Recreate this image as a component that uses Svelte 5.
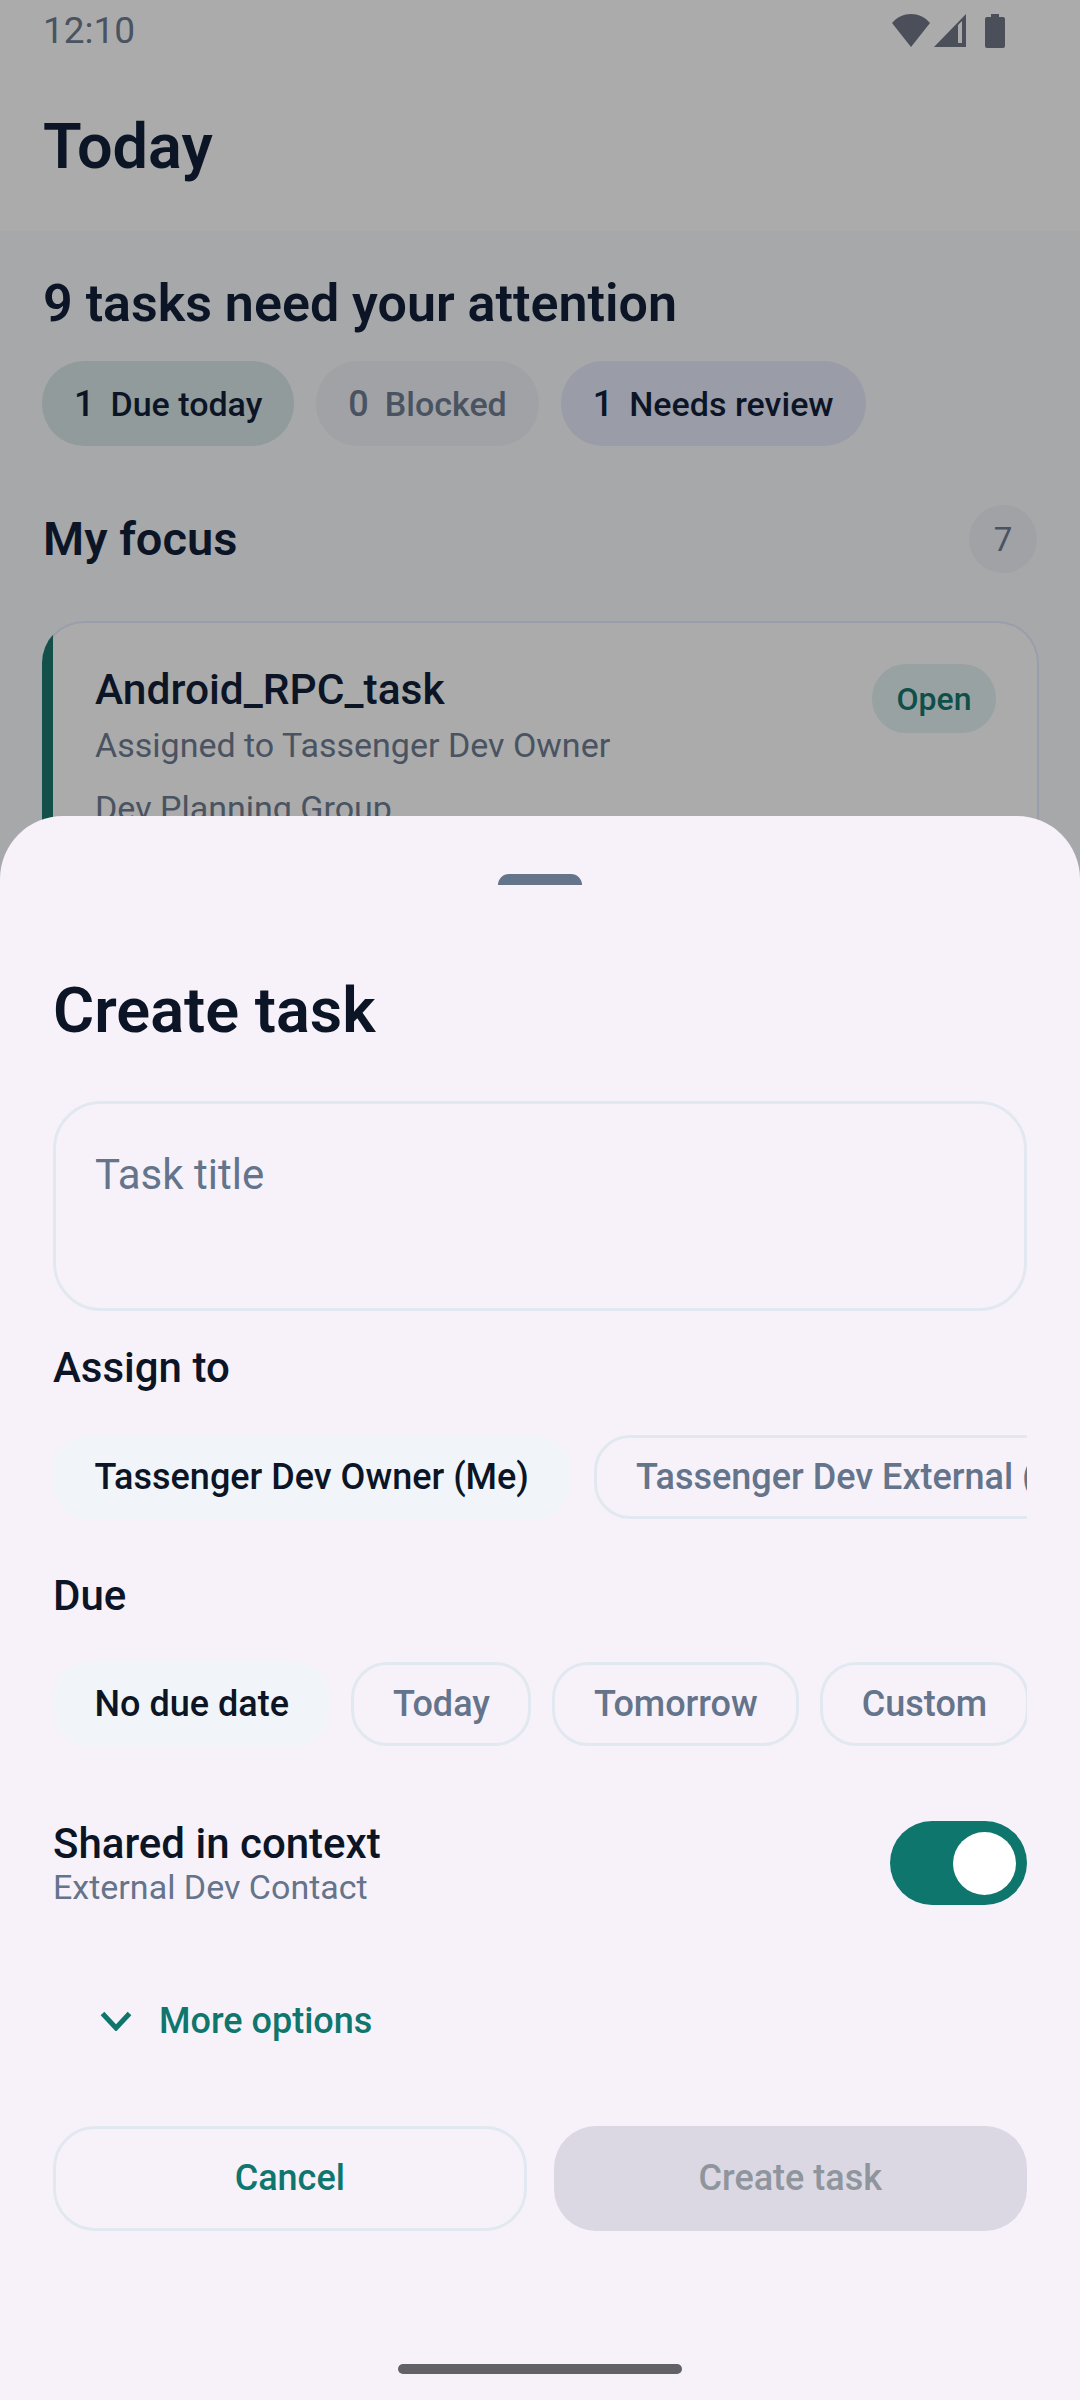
<script>
  const dueOptions = ['Today', 'Tomorrow', 'Custom'];
</script>

<div class="screen">
  <div class="behind">
    <header class="top">
      <div class="status">
        <span class="time">12:10</span>
        <div class="status-icons">
          <svg class="wifi" width="38" height="33" viewBox="0 0 38 33"><path d="M0 9 C5 3 12 0 19 0 C26 0 33 3 38 9 L19 33 Z" fill="#4a4f5a"/></svg>
          <svg class="signal" width="32" height="33" viewBox="0 0 32 33"><path fill-rule="evenodd" d="M32 0 V33 H0 Z M24 11 L28 7 V29 H24 Z" fill="#4a4f5a"/></svg>
          <svg width="20" height="34" viewBox="0 0 20 34"><path d="M6 0 H14 V3 H18 Q20 3 20 5 V32 Q20 34 18 34 H2 Q0 34 0 32 V5 Q0 3 2 3 H6 Z" fill="#4a4f5a"/></svg>
        </div>
      </div>
      <h1>Today</h1>
    </header>

    <main class="content">
      <h2>9 tasks need your attention</h2>
      <div class="summary">
        <div class="pill green"><b>1</b><span>Due today</span></div>
        <div class="pill grey"><b>0</b><span>Blocked</span></div>
        <div class="pill purple"><b>1</b><span>Needs review</span></div>
      </div>
      <div class="focus-head">
        <h3>My focus</h3>
        <span class="count">7</span>
      </div>
      <article class="card">
        <div class="accent"></div>
        <div class="card-body">
          <div class="card-top">
            <div>
              <div class="card-title">Android_RPC_task</div>
              <div class="card-sub">Assigned to Tassenger Dev Owner</div>
            </div>
            <span class="open">Open</span>
          </div>
          <div class="card-sub group">Dev Planning Group</div>
        </div>
      </article>
    </main>
  </div>

  <section class="sheet">
    <div class="handle"></div>
    <div class="sheet-title">Create task</div>
    <div class="input">Task title</div>

    <div class="label assign">Assign to</div>
    <div class="chips">
      <div class="chip on">Tassenger Dev Owner (Me)</div>
      <div class="chip">Tassenger Dev External (External)</div>
    </div>

    <div class="label due">Due</div>
    <div class="chips due-chips">
      <div class="chip on">No due date</div>
      {#each dueOptions as o}
        <div class="chip">{o}</div>
      {/each}
    </div>

    <div class="shared">
      <div>
        <div class="label shared-label">Shared in context</div>
        <div class="shared-sub">External Dev Contact</div>
      </div>
      <div class="switch"><div class="thumb"></div></div>
    </div>

    <div class="more">
      <svg width="32" height="20" viewBox="0 0 32 20"><path d="M2.5 2.5 L16 17 L29.5 2.5" fill="none" stroke="#0f766e" stroke-width="5"/></svg>
      <span>More options</span>
    </div>

    <div class="actions">
      <div class="btn cancel">Cancel</div>
      <div class="btn create">Create task</div>
    </div>

    <div class="home"></div>
  </section>
</div>

<style>
  :global(body) { margin: 0; }
  .screen {
    position: relative;
    width: 1080px;
    height: 2400px;
    overflow: hidden;
    background: #a7a8aa;
    font-family: Roboto, "Liberation Sans", sans-serif;
    color: #0c1526;
  }
  .top { background: #ababab; height: 231px; padding: 0 43px; box-sizing: border-box; }
  .status { display: flex; justify-content: space-between; align-items: flex-start; height: 62px; }
  .time { font-size: 37px; line-height: 62px; color: #4a5361; }
  .status-icons { display: flex; align-items: flex-start; margin: 14px 32px 0 0; }
  .signal { margin-left: 4px; margin-right: 19px; }
  h1 { margin: 47.5px 0 0; font-size: 63px; font-weight: 600; line-height: 74px; }
  .content { padding: 0 43px; }
  h2 { margin: 49px 0 0; font-size: 52px; font-weight: 600; line-height: 48px; }
  .summary { display: flex; gap: 22px; margin-top: 33px; margin-left: -1px; }
  .pill { display: flex; align-items: center; gap: 16px; height: 85px; padding: 0 32px; border-radius: 42px; font-size: 34px; font-weight: 500; }
  .pill b { font-weight: 500; font-size: 36px; }
  .green { background: #929b9b; }
  .grey { background: #a0a2a5; color: #4a5361; }
  .purple { background: #9a9ca8; }
  .focus-head { display: flex; justify-content: space-between; align-items: center; margin-top: 59px; }
  h3 { margin: 0; font-size: 47px; font-weight: 600; line-height: 52px; }
  .count { width: 68px; height: 68px; border-radius: 50%; background: #a0a2a5; color: #4a5361; font-size: 33px; display: flex; align-items: center; justify-content: center; }
  .card {
    display: flex;
    margin: 48px -2px 0 -1px;
    height: 500px;
    overflow: hidden;
    background: #ababab;
    box-shadow: inset 0 0 0 2px #9a9eac;
    border-radius: 42px;
  }
  .accent { flex: none; width: 11px; background: #14504a; }
  .card-body { flex: 1; padding: 43px 43px 0 42px; }
  .card-top { display: flex; justify-content: space-between; align-items: flex-start; }
  .card-title { font-size: 42.5px; font-weight: 500; line-height: 52px; }
  .card-sub { font-size: 34px; color: #4a5361; line-height: 44px; margin-top: 7px; }
  .group { margin-top: 19px; }
  .open { background: #98a2a2; color: #0f4f4a; font-size: 32px; font-weight: 500; height: 69px; width: 124px; border-radius: 34px; display: flex; align-items: center; justify-content: center; }

  .sheet {
    position: absolute;
    left: 0; right: 0; top: 816px; bottom: 0;
    background: #f7f2fa;
    border-radius: 63px 63px 0 0;
    padding: 0 53px;
    display: flex;
    flex-direction: column;
  }
  .handle { align-self: center; margin-top: 58px; width: 84px; height: 11px; background: #64748b; border-radius: 11px 11px 0 0; }
  .sheet-title { margin-top: 90px; font-size: 63px; font-weight: 600; line-height: 72px; }
  .input {
    margin-top: 54px; height: 210px; box-sizing: border-box;
    border: 3px solid #e2e8f0; border-radius: 48px;
    padding: 46px 39px 0; font-size: 42px; line-height: 50px; color: #64748b;
  }
  .label { font-size: 42px; font-weight: 500; line-height: 46px; }
  .assign { margin-top: 34px; }
  .due { margin-top: 53.5px; }
  .chips { display: flex; gap: 24px; margin-top: 44px; overflow: hidden; }
  .due-chips { gap: 21px; margin-top: 43px; }
  .chip {
    flex: none; height: 84px; box-sizing: border-box; padding: 0 38.5px;
    border: 3px solid #e2e8f0; border-radius: 36px;
    display: flex; align-items: center;
    font-size: 36px; font-weight: 500; color: #64748b; white-space: nowrap;
  }
  .chip.on { background: #f1f5f9; border-color: #f1f5f9; color: #0c1526; }
  .shared { display: flex; justify-content: space-between; align-items: flex-start; margin-top: 75px; }
  .shared-label { line-height: 45px; }
  .shared-sub { font-size: 34px; line-height: 42px; color: #64748b; font-weight: 400; }
  .switch { width: 137px; height: 84px; background: #0f766e; border-radius: 42px; position: relative; }
  .thumb { position: absolute; width: 63px; height: 63px; top: 11px; right: 11px; background: #fff; border-radius: 50%; }
  .more { display: flex; align-items: center; gap: 27px; margin-top: 88px; margin-left: 47px; color: #0f766e; font-size: 36px; font-weight: 500; line-height: 50px; }
  .actions { display: grid; grid-template-columns: 1fr 1fr; gap: 27px; margin-top: 80px; }
  .btn { height: 105px; box-sizing: border-box; border-radius: 42px; display: flex; align-items: center; justify-content: center; font-size: 36px; font-weight: 500; }
  .cancel { border: 3px solid #e2e8f0; color: #0f766e; }
  .create { background: #dbd8e3; color: #8f959c; }
  .home { position: absolute; left: 398px; width: 284px; height: 10px; top: 1548px; border-radius: 5px; background: #616166; }
</style>
